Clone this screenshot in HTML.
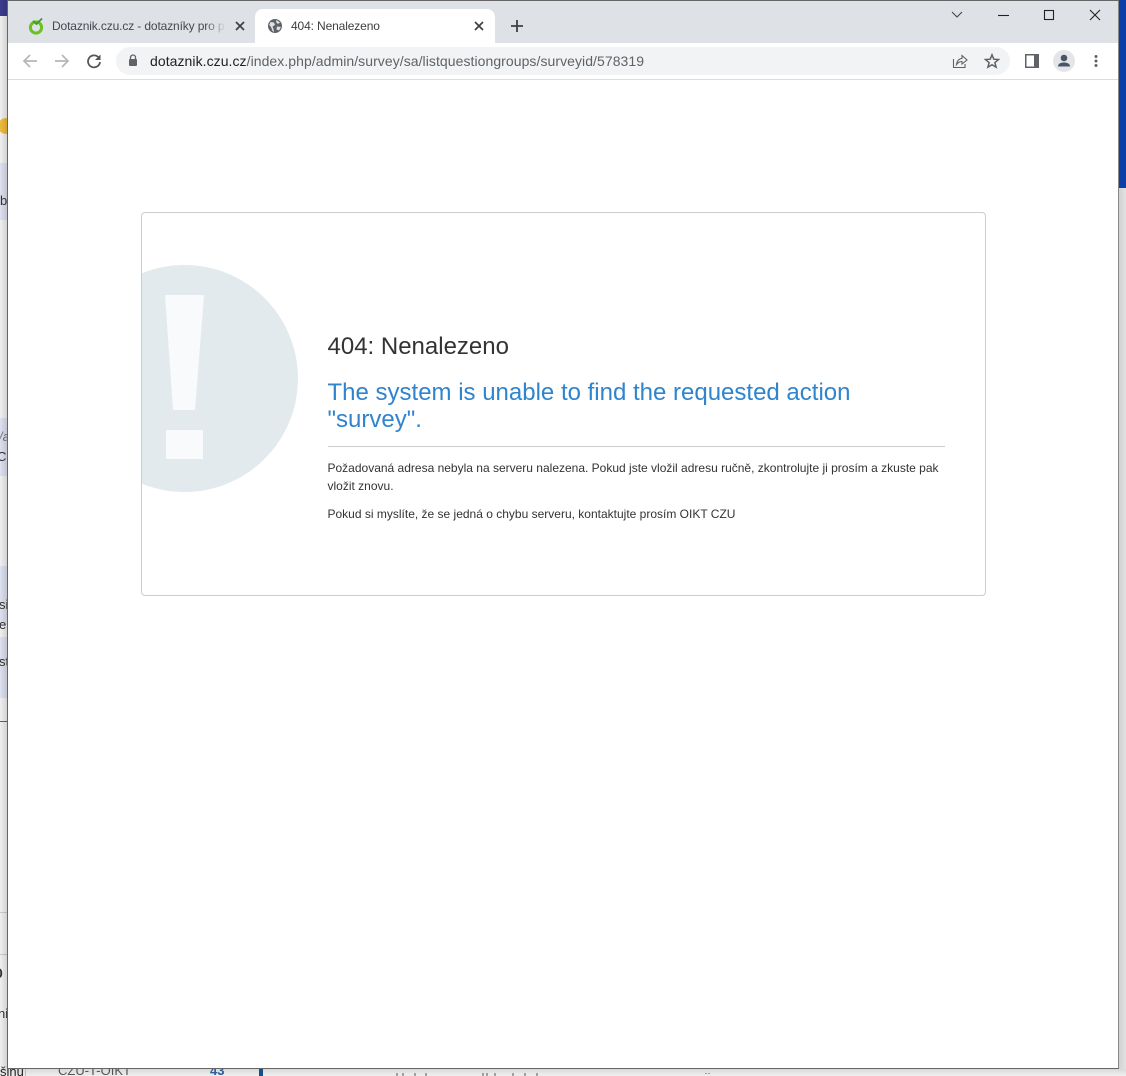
<!DOCTYPE html>
<html lang="cs"><head><meta charset="utf-8"><title>404: Nenalezeno</title>
<style>
html,body{margin:0;padding:0;width:1126px;height:1076px;overflow:hidden;background:#f1f1f1}
body{position:relative;font-family:"Liberation Sans",sans-serif;color:#333}
.a{position:absolute;white-space:nowrap}
svg{position:absolute;display:block}
</style></head><body>
<!-- background page, left strip -->
<div class="a" style="left:0;top:0;width:8px;height:16px;background:#3a3a8c"></div>
<div class="a" style="left:0;top:16px;width:8px;height:1060px;background:#f0f0f0"></div>
<div class="a" style="left:0;top:163px;width:8px;height:57px;background:#dde0ee"></div>
<div class="a" style="left:0;top:418px;width:8px;height:58px;background:#dde0ee"></div>
<div class="a" style="left:0;top:566px;width:8px;height:59px;background:#dde0ee"></div>
<div class="a" style="left:0;top:637px;width:8px;height:61px;background:#dde0ee"></div>
<div class="a" style="left:0;top:721px;width:8px;height:1px;background:#5a5aa8"></div>
<div class="a" style="left:0;top:912px;width:8px;height:1px;background:#ccc"></div>
<div class="a" style="left:0;top:954px;width:8px;height:1px;background:#ccc"></div>
<div class="a" style="left:-2px;top:118px;width:16px;height:16px;border-radius:50%;background:#eebc3a"></div>
<div class="a" style="left:0;top:193px;font-size:13px">b</div>
<div class="a" style="left:-1px;top:429px;font-size:13px;color:#777;font-style:italic">/a</div>
<div class="a" style="left:-3px;top:449px;font-size:13px">C</div>
<div class="a" style="left:-1px;top:597px;font-size:13px">si</div>
<div class="a" style="left:-1px;top:617px;font-size:13px">e</div>
<div class="a" style="left:-1px;top:654px;font-size:13px">st</div>
<div class="a" style="left:-5px;top:965px;font-size:14px;font-weight:bold">0</div>
<div class="a" style="left:-2px;top:1006px;font-size:13px">ni</div>
<div class="a" style="left:0;top:0;width:8px;height:1076px;background:linear-gradient(90deg,rgba(0,0,0,0),rgba(0,0,0,.14))"></div>
<!-- right strip -->
<div class="a" style="left:1118px;top:0;width:8px;height:188px;background:#0b3ea6"></div>
<div class="a" style="left:1118px;top:188px;width:8px;height:888px;background:linear-gradient(90deg,#cfcfcf,#e2e2e2)"></div>
<!-- bottom strip -->
<div class="a" style="left:0;top:1069px;width:1126px;height:7px;background:linear-gradient(#d9d9d9,#f0f0f0)"></div>
<div class="a" style="left:0;top:1064px;font-size:13px;color:#222">šinu</div>
<div class="a" style="left:25px;top:1069px;width:1px;height:7px;background:#bbb"></div>
<div class="a" style="left:58px;top:1063px;font-size:13px;color:#555">CZU-T-OIKT</div>
<div class="a" style="left:210px;top:1063px;font-size:13px;font-weight:bold;color:#2a5f9e">43</div>
<div class="a" style="left:259px;top:1068px;width:4px;height:8px;background:#14508c"></div>
<svg style="left:395px;top:1073px" width="320" height="3" viewBox="0 0 320 3"><path d="M2 0V3M8 0V3M20 0V3M31 0V3M88 0V3M92 0V3M100 0V3M118 0V3M130 0V3M142 0V3M311 0V1M314 0V1" stroke="#555" stroke-width="1"/></svg>
<!-- window -->
<div class="a" style="left:7px;top:0;width:1112px;height:1069px;background:#fff;box-sizing:border-box;border:1px solid #666;border-right-color:#888;overflow:hidden">
</div>
<!-- title bar -->
<div class="a" style="left:8px;top:1px;width:1110px;height:42px;background:#dee1e6"></div>
<!-- active tab -->
<div class="a" style="left:255px;top:9px;width:240px;height:34px;background:#fff;border-radius:8px 8px 0 0"></div>
<!-- inactive tab -->
<svg style="left:27px;top:17px" width="18" height="18" viewBox="0 0 18 18"><circle cx="9" cy="10.500" r="5.600" fill="none" stroke="#6cc024" stroke-width="3"/><path d="M6 4 L9.500 7 L15 1.500" fill="none" stroke="#3f9a2c" stroke-width="1.800"/></svg>
<div class="a" style="left:52px;top:19px;width:174px;overflow:hidden;font-size:12px;line-height:14px;color:#45494e;letter-spacing:-.13px">Dotaznik.czu.cz - dotazníky pro p</div>
<div class="a" style="left:205px;top:19px;width:21px;height:14px;background:linear-gradient(90deg,rgba(222,225,230,0),#dee1e6)"></div>
<svg style="left:235px;top:21px" width="10" height="10" viewBox="0 0 10 10"><path d="M1 1L9 9M9 1L1 9" stroke="#3c4043" stroke-width="1.700"/></svg>
<!-- active tab content -->
<svg style="left:268px;top:19px" width="14" height="14" viewBox="0 0 14 14"><circle cx="7" cy="7" r="7" fill="#5f6368"/><path d="M2.500 3 L6 3.500 L7 6 L4.500 7.500 L5.500 10 L6 13 L4.500 12 L3 8 L1.200 6Z M8.500 1 L12 3.500 L10 5 L8 3Z M9 7.500 L13 8 L11 11.500 L8.500 10.500Z" fill="#dfe1e4"/></svg>
<div class="a" style="left:291px;top:19px;font-size:12px;line-height:14px;color:#3c4043;letter-spacing:-.13px">404: Nenalezeno</div>
<svg style="left:474px;top:21px" width="10" height="10" viewBox="0 0 10 10"><path d="M1 1L9 9M9 1L1 9" stroke="#3c4043" stroke-width="1.700"/></svg>
<svg style="left:510px;top:19px" width="14" height="14" viewBox="0 0 14 14"><path d="M7 1V13M1 7H13" stroke="#3c4043" stroke-width="1.800"/></svg>
<!-- window controls -->
<svg style="left:950px;top:8px" width="160" height="16" viewBox="0 0 160 16"><path d="M2 4L7 9L12 4" fill="none" stroke="#444" stroke-width="1.100"/><path d="M48 7.500H59" stroke="#222" stroke-width="1.100"/><rect x="94.500" y="2.500" width="9" height="9" fill="none" stroke="#222" stroke-width="1.100"/><path d="M140 2L150 12M150 2L140 12" stroke="#222" stroke-width="1.100"/></svg>
<!-- toolbar -->
<div class="a" style="left:8px;top:43px;width:1110px;height:36px;background:#fff"></div>
<div class="a" style="left:8px;top:79px;width:1110px;height:1px;background:#dadce0"></div>
<svg style="left:22px;top:53px" width="16" height="16" viewBox="0 0 16 16"><path d="M15 8H2M8 2L2 8L8 14" fill="none" stroke="#b4b7bb" stroke-width="1.700"/></svg>
<svg style="left:54px;top:53px" width="16" height="16" viewBox="0 0 16 16"><path d="M1 8H14M8 2L14 8L8 14" fill="none" stroke="#b4b7bb" stroke-width="1.700"/></svg>
<svg style="left:86px;top:53px" width="16" height="16" viewBox="0 0 16 16"><path d="M13 5A6 6 0 1 0 14 9" fill="none" stroke="#53565a" stroke-width="1.800"/><path d="M14.500 1.500V7H9Z" fill="#53565a"/></svg>
<div class="a" style="left:116px;top:47px;width:894px;height:28px;border-radius:14px;background:#f1f3f4"></div>
<svg style="left:128px;top:54px" width="10" height="13" viewBox="0 0 10 13"><path d="M2.500 5V3.500a2.500 2.500 0 0 1 5 0V5" fill="none" stroke="#5f6368" stroke-width="1.300"/><rect x="1" y="5" width="8" height="7" rx="1" fill="#5f6368"/></svg>
<div class="a" style="left:150px;top:53px;font-size:14px;line-height:16px;color:#5f6368;letter-spacing:.06px"><span style="color:#202124">dotaznik.czu.cz</span>/index.php/admin/survey/sa/listquestiongroups/surveyid/578319</div>
<svg style="left:952px;top:53px" width="16" height="16" viewBox="0 0 16 16"><path d="M1.500 6V14.500H13V11" fill="none" stroke="#5f6368" stroke-width="1.100"/><path d="M4.500 11.500C5 7.500 7.500 5.500 10 5.500V2.500L15 7L10 11V8.500C8 8.500 6 9.500 4.500 11.500Z" fill="none" stroke="#5f6368" stroke-width="1.100"/></svg>
<svg style="left:984px;top:53px" width="16" height="16" viewBox="0 0 16 16"><path d="M8 1.800L9.800 6.200L14.600 6.500L10.900 9.600L12.100 14.200L8 11.700L3.900 14.200L5.100 9.600L1.400 6.500L6.200 6.200Z" fill="none" stroke="#5f6368" stroke-width="1.500"/></svg>
<svg style="left:1025px;top:54px" width="14" height="14" viewBox="0 0 14 14"><rect width="14" height="14" fill="#5f6368"/><rect x="1.500" y="1.500" width="7.500" height="11" fill="#fff"/></svg>
<svg style="left:1053px;top:50px" width="22" height="22" viewBox="0 0 22 22"><circle cx="11" cy="11" r="11" fill="#e3e5e9"/><circle cx="11" cy="8" r="3.300" fill="#4a5568"/><path d="M5 16.500C5 13.500 8 12.500 11 12.500S17 13.500 17 16.500Z" fill="#4a5568"/></svg>
<svg style="left:1094px;top:54px" width="4" height="14" viewBox="0 0 4 14"><circle cx="2" cy="2.500" r="1.500" fill="#5f6368"/><circle cx="2" cy="7" r="1.500" fill="#5f6368"/><circle cx="2" cy="11.500" r="1.500" fill="#5f6368"/></svg>
<!-- card -->
<div class="a" style="left:141px;top:212px;width:845px;height:384px;box-sizing:border-box;border:1px solid #ccc;border-radius:4px;background:#fff;overflow:hidden">
<svg style="left:-142px;top:-213px" width="400" height="500" viewBox="0 0 400 500"><circle cx="184.500" cy="378.500" r="113.500" fill="#e3eaee"/><path d="M165 295H204L195 410H173Z" fill="#f8fafb"/><rect x="166" y="430" width="37" height="29" fill="#f8fafb"/></svg>
</div>
<div class="a" style="left:327.500px;top:333px;font-size:24px;line-height:28px;color:#333">404: Nenalezeno</div>
<div class="a" style="left:327.500px;top:379px;font-size:24px;line-height:27px;color:#2f84cd;white-space:normal;width:620px">The system is unable to find the requested action<br>"survey".</div>
<div class="a" style="left:328px;top:446px;width:617px;height:1px;background:#ccc"></div>
<div class="a" style="left:327.500px;top:459px;font-size:12px;line-height:18px;color:#333">Požadovaná adresa nebyla na serveru nalezena. Pokud jste vložil adresu ručně, zkontrolujte ji prosím a zkuste pak<br>vložit znovu.</div>
<div class="a" style="left:327.500px;top:505px;font-size:12px;line-height:18px;color:#333">Pokud si myslíte, že se jedná o chybu serveru, kontaktujte prosím OIKT CZU</div>
</body></html>
